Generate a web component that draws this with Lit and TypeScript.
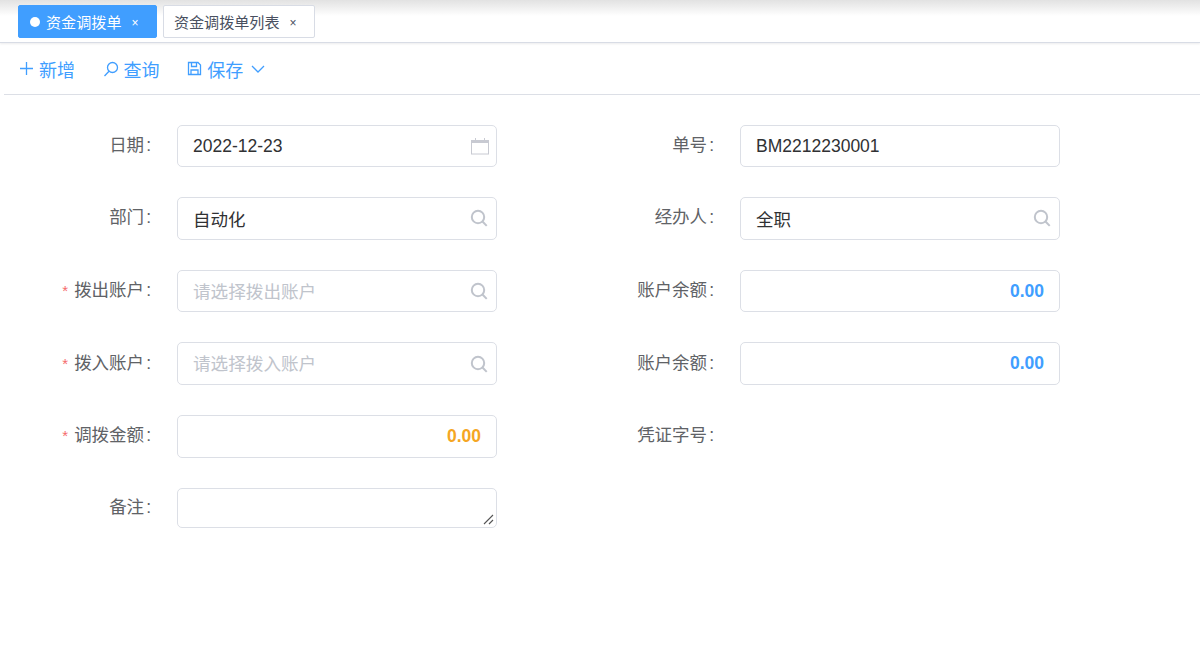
import {LitElement, html, css, nothing} from 'lit';
import {customElement} from 'lit/decorators.js';

type FieldKind = 'text' | 'search' | 'date' | 'number' | 'amount' | 'area' | 'none';

interface Field {
  label: string;
  kind: FieldKind;
  value?: string;
  placeholder?: string;
  required?: boolean;
}

const fields: Field[] = [
  {label: '日期', kind: 'date', value: '2022-12-23'},
  {label: '单号', kind: 'text', value: 'BM2212230001'},
  {label: '部门', kind: 'search', value: '自动化'},
  {label: '经办人', kind: 'search', value: '全职'},
  {label: '拨出账户', kind: 'search', placeholder: '请选择拨出账户', required: true},
  {label: '账户余额', kind: 'number', value: '0.00'},
  {label: '拨入账户', kind: 'search', placeholder: '请选择拨入账户', required: true},
  {label: '账户余额', kind: 'number', value: '0.00'},
  {label: '调拨金额', kind: 'amount', value: '0.00', required: true},
  {label: '凭证字号', kind: 'none'},
  {label: '备注', kind: 'area'},
];

const searchIcon = html`<svg width="18" height="18" viewBox="0 0 18 18" fill="none" stroke="#c0c4cc" stroke-width="2">
  <circle cx="8" cy="8" r="6.2"></circle><path d="M12.5 12.5l4.2 4.4"></path></svg>`;

const dateIcon = html`<svg class="date-icon" width="18" height="18" viewBox="0 0 18 18" fill="none" stroke="#c8cad2" stroke-width="1">
  <rect x="0.5" y="3.5" width="17" height="13.5" fill="#fff"></rect>
  <rect x="0.5" y="3" width="17" height="3" fill="#c8cad2" stroke="none"></rect>
  <path d="M4.5 1v2.5M13.5 1v2.5"></path></svg>`;

@customElement('app-root')
export class AppRoot extends LitElement {
  static override styles = css`
    :host {
      display: block;
      height: 660px;
      overflow: hidden;
      background: #fff;
      color: #303133;
      font-family: "Liberation Sans", "Noto Sans CJK SC", sans-serif;
    }

    .tabs {
      display: flex;
      gap: 6px;
      height: 43px;
      box-sizing: border-box;
      padding: 5px 0 0 18px;
      border-bottom: 1px solid #d8dce5;
      background: linear-gradient(#e2e2e2, #fff 16px);
      box-shadow: 0 1px 2px rgba(0, 0, 21, 0.08);
    }

    .tab {
      display: flex;
      align-items: center;
      height: 33px;
      box-sizing: border-box;
      padding: 0 17.4px 1px 10px;
      border: 1px solid #d8dce5;
      border-radius: 2px;
      background: #fff;
      color: #495060;
      font-size: 15.1px;
    }

    .tab.active {
      background: #409eff;
      border-color: #409eff;
      color: #fff;
    }

    .dot {
      width: 10px;
      height: 10px;
      margin: 1px 6px 0 1px;
      border-radius: 50%;
      background: #fff;
    }

    .close {
      margin: 3px 0 0 10px;
      font-size: 12px;
      line-height: 1;
    }

    .toolbar {
      display: flex;
      align-items: center;
      gap: 27.6px;
      height: 52px;
      box-sizing: border-box;
      margin-left: 4px;
      padding-left: 15px;
      border-bottom: 1px solid #dcdfe6;
      color: #409eff;
      font-size: 18px;
    }

    .action {
      display: flex;
      align-items: center;
      gap: 5px;
    }

    .chevron {
      margin-left: 2px;
    }

    .form {
      display: grid;
      grid-template-columns: 563px 563px;
      row-gap: 30px;
      padding-top: 29.6px;
    }

    .row {
      display: flex;
      align-items: center;
      height: 42.6px;
    }

    .row.area {
      height: 40px;
    }

    .label {
      width: 151px;
      margin-right: 26px;
      padding-bottom: 5px;
      text-align: right;
      color: #606266;
      font-size: 17.5px;
    }

    .colon {
      margin-left: 2px;
    }

    .star {
      color: #f56c6c;
      margin-right: 6px;
      font-size: 15px;
    }

    .input {
      display: flex;
      align-items: center;
      justify-content: space-between;
      width: 320px;
      height: 100%;
      box-sizing: border-box;
      padding: 0 8px 0 15px;
      border: 1px solid #dcdfe6;
      border-radius: 5px;
      font-size: 17.5px;
    }

    .latin {
      margin-top: 2px;
    }

    .placeholder {
      color: #c0c4cc;
      font-size: 17.6px;
      margin-bottom: 2px;
    }

    .date-icon {
      margin-right: -1px;
    }

    .number {
      justify-content: flex-end;
      padding-right: 15px;
      font-weight: 700;
      color: #409eff;
    }

    .amount {
      color: #f5a623;
    }

    .area-box {
      position: relative;
    }

    .grip {
      position: absolute;
      right: 2px;
      bottom: 2px;
    }
  `;

  private renderInput(f: Field) {
    if (f.kind === 'none') return nothing;
    if (f.kind === 'area') {
      return html`<div class="input area-box">
        <svg class="grip" width="11" height="11" viewBox="0 0 11 11" stroke="#555" stroke-width="1.1">
          <path d="M1 10L10 1M6 10L10 6"></path></svg>
      </div>`;
    }
    if (f.kind === 'number' || f.kind === 'amount') {
      return html`<div class="input number ${f.kind === 'amount' ? 'amount' : ''}">${f.value}</div>`;
    }
    return html`<div class="input">
      ${f.value
        ? html`<span class=${f.kind === 'search' ? '' : 'latin'}>${f.value}</span>`
        : html`<span class="placeholder">${f.placeholder}</span>`}
      ${f.kind === 'search' ? searchIcon : nothing}
      ${f.kind === 'date' ? dateIcon : nothing}
    </div>`;
  }

  override render() {
    return html`
      <div class="tabs">
        <div class="tab active"><span class="dot"></span>资金调拨单<span class="close">×</span></div>
        <div class="tab">资金调拨单列表<span class="close">×</span></div>
      </div>
      <div class="toolbar">
        <div class="action">
          <svg width="15" height="15" viewBox="0 0 15 15" stroke="#409eff" stroke-width="1.3"><path d="M7.5 1v13M1 7.5h13"></path></svg>
          新增
        </div>
        <div class="action">
          <svg width="16" height="16" viewBox="0 0 16 16" fill="none" stroke="#409eff" stroke-width="1.3"><circle cx="9.5" cy="6.5" r="5"></circle><path d="M6 10.3L1.5 15"></path></svg>
          查询
        </div>
        <div class="action">
          <svg width="15" height="15" viewBox="0 0 15 15" fill="none" stroke="#409eff" stroke-width="1.3"><path d="M1.5 1.5h9.5l2.5 2.5v9.5h-12z"></path><path d="M4.5 1.5v4h5v-4M4 13.5v-4.5h7v4.5"></path></svg>
          保存
          <svg class="chevron" width="16" height="16" viewBox="0 0 16 16" fill="none" stroke="#409eff" stroke-width="1.3"><path d="M2 5l6 6 6-6"></path></svg>
        </div>
      </div>
      <div class="form">
        ${fields.map(
          (f) => html`<div class="row ${f.kind === 'area' ? 'area' : ''}">
            <div class="label">${f.required ? html`<span class="star">*</span>` : nothing}${f.label}<span class="colon">:</span></div>
            ${this.renderInput(f)}
          </div>`,
        )}
      </div>
    `;
  }
}

declare global {
  interface HTMLElementTagNameMap {
    'app-root': AppRoot;
  }
}
